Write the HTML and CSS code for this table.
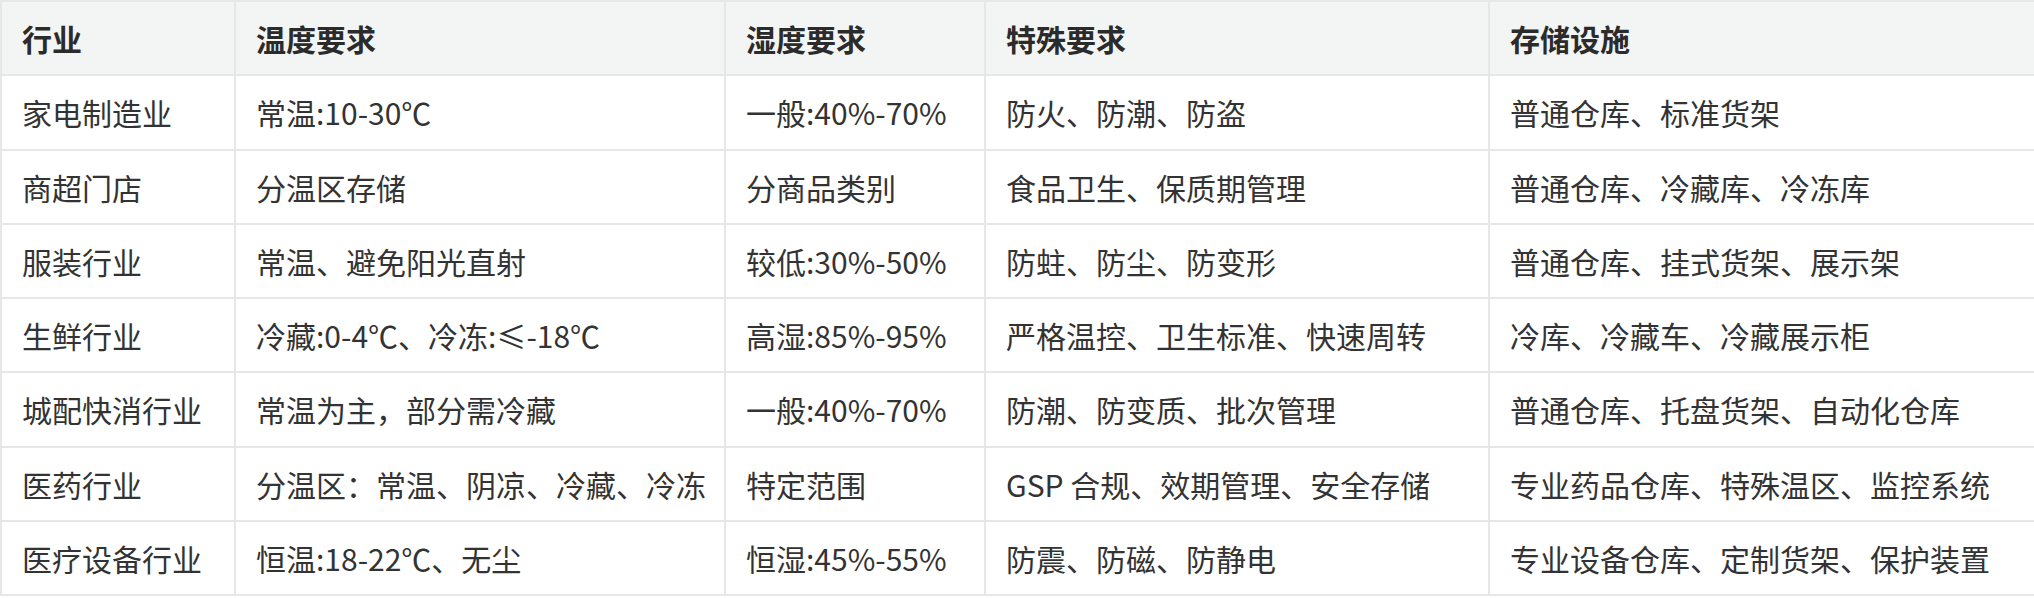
FILE: index.html
```html
<!DOCTYPE html>
<html lang="zh-CN">
<head>
    <meta charset="UTF-8">
    <title>行业存储要求</title>
    <link rel="stylesheet" href="styles.css">
</head>
<body>
    <table class="storage-table">
        <colgroup>
            <col class="col-industry">
            <col class="col-temp">
            <col class="col-humidity">
            <col class="col-special">
            <col class="col-facility">
        </colgroup>
        <thead>
            <tr>
                <th>行业</th>
                <th>温度要求</th>
                <th>湿度要求</th>
                <th>特殊要求</th>
                <th>存储设施</th>
            </tr>
        </thead>
        <tbody>
            <tr>
                <td>家电制造业</td>
                <td>常温:10-30℃</td>
                <td>一般:40%-70%</td>
                <td>防火、防潮、防盗</td>
                <td>普通仓库、标准货架</td>
            </tr>
            <tr>
                <td>商超门店</td>
                <td>分温区存储</td>
                <td>分商品类别</td>
                <td>食品卫生、保质期管理</td>
                <td>普通仓库、冷藏库、冷冻库</td>
            </tr>
            <tr>
                <td>服装行业</td>
                <td>常温、避免阳光直射</td>
                <td>较低:30%-50%</td>
                <td>防蛀、防尘、防变形</td>
                <td>普通仓库、挂式货架、展示架</td>
            </tr>
            <tr>
                <td>生鲜行业</td>
                <td>冷藏:0-4℃、冷冻:≤-18℃</td>
                <td>高湿:85%-95%</td>
                <td>严格温控、卫生标准、快速周转</td>
                <td>冷库、冷藏车、冷藏展示柜</td>
            </tr>
            <tr>
                <td>城配快消行业</td>
                <td>常温为主，部分需冷藏</td>
                <td>一般:40%-70%</td>
                <td>防潮、防变质、批次管理</td>
                <td>普通仓库、托盘货架、自动化仓库</td>
            </tr>
            <tr>
                <td>医药行业</td>
                <td>分温区：常温、阴凉、冷藏、冷冻</td>
                <td>特定范围</td>
                <td>GSP 合规、效期管理、安全存储</td>
                <td>专业药品仓库、特殊温区、监控系统</td>
            </tr>
            <tr>
                <td>医疗设备行业</td>
                <td>恒温:18-22℃、无尘</td>
                <td>恒湿:45%-55%</td>
                <td>防震、防磁、防静电</td>
                <td>专业设备仓库、定制货架、保护装置</td>
            </tr>
        </tbody>
    </table>
</body>
</html>
```

FILE: styles.css
```css
body {
    margin: 0;
    padding: 0;
    background: #ffffff;
    font-family: "Noto Sans CJK SC", "Noto Sans", sans-serif;
    color: #333333;
}
.storage-table {
    width: 2034px;
    table-layout: fixed;
    border-collapse: collapse;
    font-size: 30px;
}
.col-industry { width: 234px; }
.col-temp { width: 490px; }
.col-humidity { width: 260px; }
.col-special { width: 504px; }
.col-facility { width: 546px; }
.storage-table th,
.storage-table td {
    border: 2px solid #e6e7e7;
    padding: 15px 20px;
    line-height: 42.3px;
    text-align: left;
    white-space: nowrap;
}
.storage-table th {
    background: #f3f4f4;
    font-weight: 700;
    color: #2b2b2b;
}
```
